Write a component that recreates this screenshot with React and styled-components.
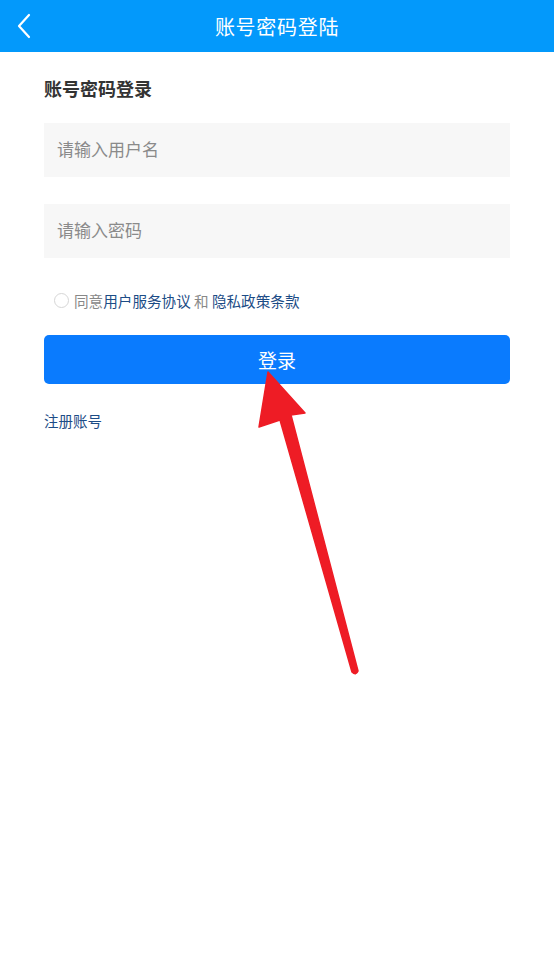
import React, { useState } from "react";
import styled, { createGlobalStyle } from "styled-components";

const GlobalStyle = createGlobalStyle`
  html, body {
    margin: 0;
    padding: 0;
    background: #fff;
    font-family: "Noto Sans CJK SC", "Noto Sans", sans-serif;
  }
`;

function App() {
  const [agree, setAgree] = useState(false);

  return (
    <Page>
      <GlobalStyle />
      <Header>
        <BackButton>
          <svg width="16" height="26" viewBox="0 0 16 26" fill="none">
            <path d="M13 2 L3 13 L13 24" stroke="#fff" strokeWidth="2.2" strokeLinecap="round" strokeLinejoin="round" />
          </svg>
        </BackButton>
        <Title>账号密码登陆</Title>
      </Header>

      <Body>
        <Heading>账号密码登录</Heading>
        <Field type="text" placeholder="请输入用户名" />
        <Field type="password" placeholder="请输入密码" />

        <AgreeRow onClick={() => setAgree(!agree)}>
          <Radio checked={agree} />
          <span>同意</span>
          <LinkText>用户服务协议</LinkText>
          <span>&nbsp;和&nbsp;</span>
          <LinkText>隐私政策条款</LinkText>
        </AgreeRow>

        <LoginButton>登录</LoginButton>
        <RegisterLink>注册账号</RegisterLink>
      </Body>

      <Arrow width="554" height="953" viewBox="0 0 554 953">
        <path
          d="M268 372 L305 413 L291 415 L358 671 Q356 676 352 672 L280 420 L259 427 Z"
          fill="#ee1c25"
          stroke="#ee1c25"
          strokeWidth="1.5"
          strokeLinejoin="round"
        />
      </Arrow>
    </Page>
  );
}

const Page = styled.div`
  position: relative;
  width: 554px;
  height: 953px;
  background: #fff;
  overflow: hidden;
`;

const Header = styled.div`
  height: 52px;
  background-color: #0399fb;
  display: flex;
  align-items: center;
  justify-content: center;
  position: relative;
`;

const BackButton = styled.div`
  position: absolute;
  left: 16px;
  top: 13px;
  display: flex;
`;

const Title = styled.div`
  color: #fff;
  font-size: 20px;
  letter-spacing: 0.7px;
`;

const Body = styled.div`
  display: flex;
  flex-direction: column;
  padding: 0 44px;
`;

const Heading = styled.div`
  margin-top: 23px;
  font-size: 18px;
  font-weight: 700;
  color: #333;
  line-height: 26px;
  margin-bottom: 22px;
`;

const Field = styled.input`
  height: 54px;
  box-sizing: border-box;
  border: none;
  outline: none;
  background: #f7f7f7;
  padding: 0 13px 3px;
  font-family: inherit;
  font-size: 17px;
  color: #333;
  margin-bottom: 27px;

  &::placeholder {
    color: #8a8a8a;
  }
`;

const AgreeRow = styled.div`
  display: flex;
  align-items: center;
  margin-top: 5px;
  padding-left: 10px;
  height: 20px;
  font-size: 14.6px;
  color: #888;
  cursor: pointer;
`;

const Radio = styled.span`
  width: 13px;
  height: 13px;
  border-radius: 50%;
  border: 1px solid #d6d6d6;
  background: ${(p) => (p.checked ? "#0a7bfe" : "#fff")};
  margin-right: 5px;
`;

const LinkText = styled.span`
  color: #1c4c86;
`;

const LoginButton = styled.button`
  margin-top: 25px;
  height: 49px;
  border: none;
  border-radius: 5px;
  background-color: #0a7bfe;
  color: #fff;
  font-family: inherit;
  font-size: 19px;
  cursor: pointer;
`;

const RegisterLink = styled.div`
  margin-top: 27px;
  font-size: 14.5px;
  color: #1c4c86;
  line-height: 20px;
`;

const Arrow = styled.svg`
  position: absolute;
  left: 0;
  top: 0;
  pointer-events: none;
`;

export default App;
